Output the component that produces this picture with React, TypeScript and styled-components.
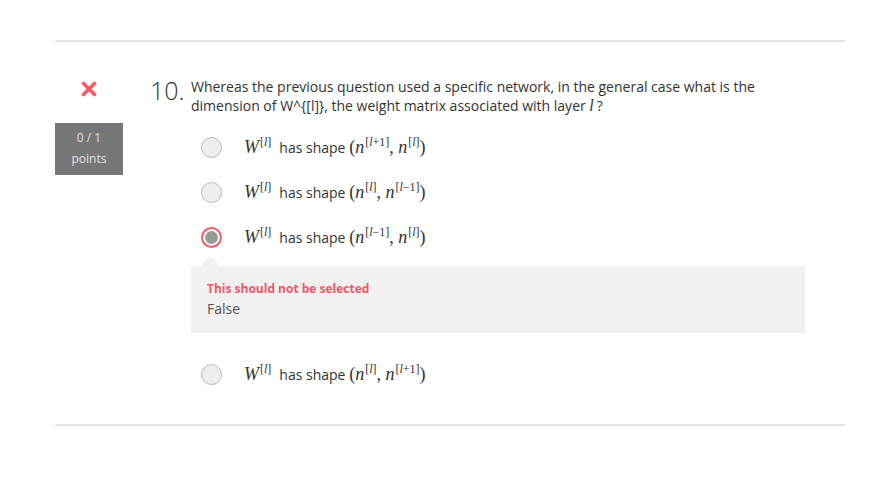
import styled, { createGlobalStyle } from 'styled-components'

const GlobalStyle = createGlobalStyle`
  body {
    margin: 0;
    background: #fff;
    font-family: 'Open Sans', 'Liberation Sans', sans-serif;
    color: #333;
  }
`

const Page = styled.div`
  width: 790px;
  padding: 40px 0 0 55px;
`

const Rule = styled.hr`
  border: none;
  border-top: 2px solid #e4e4e4;
  margin: 0;
`

const Question = styled.div`
  display: flex;
  padding: 34px 0 38px;
`

const Side = styled.div`
  width: 68px;
  display: flex;
  flex-direction: column;
  align-items: center;
`

const Cross = styled.svg`
  width: 16px;
  height: 16px;
  margin-top: 5px;
`

const Points = styled.div`
  margin-top: 26px;
  width: 68px;
  height: 52px;
  background: #767676;
  color: #e2e2e2;
  font-size: 12px;
  line-height: 21px;
  text-align: center;
  padding-top: 4px;
  box-sizing: border-box;
`

const Body = styled.div`
  flex: 1;
  padding-left: 27px;
`

const Head = styled.div`
  display: flex;
`

const Number = styled.div`
  font-size: 25px;
  font-weight: 300;
  color: #333;
  line-height: 26px;
  width: 41px;
  padding-top: 1px;
`

const Prompt = styled.div`
  font-size: 14px;
  line-height: 19px;
  color: #333;
  width: 590px;
  padding-top: 1px;
`

const MathVar = styled.i`
  font-family: 'Liberation Serif', 'DejaVu Serif', serif;
  font-size: 16px;
  padding-right: 3px;
`

const Options = styled.div<{ $top?: number }>`
  margin-top: ${(p) => p.$top ?? 20}px;
  padding-left: 41px;
`

const Option = styled.div<{ $gap?: number }>`
  display: flex;
  align-items: center;
  height: 24px;
  margin-bottom: ${(p) => p.$gap ?? 21}px;
`

const Radio = styled.span<{ $checked?: boolean }>`
  width: 21px;
  height: 21px;
  box-sizing: border-box;
  border-radius: 50%;
  margin-left: 10px;
  margin-right: 22px;
  border: ${(p) => (p.$checked ? '2px solid #f2606c' : '1px solid #b9b9b9')};
  background: ${(p) => (p.$checked ? '#999' : '#eee')};
  box-shadow: ${(p) => (p.$checked ? 'inset 0 0 0 2px #fff' : 'none')};
`

const Label = styled.span`
  font-size: 14px;
  color: #333;
  display: flex;
  align-items: baseline;
`

const M = styled.span`
  font-family: 'Liberation Serif', 'DejaVu Serif', serif;
  font-size: 18px;
  color: #333;
`

const Mi = styled.i`
  font-style: italic;
`

const Sup = styled.sup`
  font-size: 12px;
  vertical-align: 7px;
  line-height: 0;
  margin-left: 1px;
`

const Gap = styled.span`
  width: 8px;
`

const Feedback = styled.div`
  position: relative;
  background: #f1f1f1;
  margin: 17px 40px 29px 41px;
  padding: 14px 16px 13px 16px;
`

const Arrow = styled.span`
  position: absolute;
  top: -10px;
  left: 9px;
  width: 0;
  height: 0;
  border-left: 10px solid transparent;
  border-right: 10px solid transparent;
  border-bottom: 10px solid #f1f1f1;
`

const Wrong = styled.div`
  color: #f2566a;
  font-weight: 700;
  font-size: 12px;
  line-height: 18px;
`

const Explain = styled.div`
  color: #555;
  font-size: 14px;
  line-height: 22px;
`

function W() {
  return (
    <>
      <Mi>W</Mi>
      <Sup>
        [<Mi>l</Mi>]
      </Sup>
    </>
  )
}

function N({ sup }: { sup: string }) {
  return (
    <>
      <Mi>n</Mi>
      <Sup>
        [<Mi>l</Mi>
        {sup}]
      </Sup>
    </>
  )
}

function Shape({ a, b }: { a: string; b: string }) {
  return (
    <Label>
      <M>
        <W />
      </M>
      <Gap />
      has shape&nbsp;
      <M>
        (<N sup={a} />, <N sup={b} />)
      </M>
    </Label>
  )
}

export default function App() {
  return (
    <Page>
      <GlobalStyle />
      <Rule />
      <Question>
        <Side>
          <Cross viewBox="0 0 16 16">
            <path d="M2.5 2.5 L13.5 13.5 M13.5 2.5 L2.5 13.5" stroke="#fa5a64" strokeWidth="3.6" strokeLinecap="round" />
          </Cross>
          <Points>
            0 / 1
            <br />
            points
          </Points>
        </Side>
        <Body>
          <Head>
            <Number>10.</Number>
            <Prompt>
              Whereas the previous question used a specific network, in the general case what is the dimension of
              W^&#123;[l]&#125;, the weight matrix associated with layer <MathVar>l</MathVar>?
            </Prompt>
          </Head>
          <Options>
            <Option>
              <Radio />
              <Shape a="+1" b="" />
            </Option>
            <Option>
              <Radio />
              <Shape a="" b="−1" />
            </Option>
            <Option $gap={0}>
              <Radio $checked />
              <Shape a="−1" b="" />
            </Option>
          </Options>
          <Feedback>
            <Arrow />
            <Wrong>This should not be selected</Wrong>
            <Explain>False</Explain>
          </Feedback>
          <Options $top={0}>
            <Option $gap={0}>
              <Radio />
              <Shape a="" b="+1" />
            </Option>
          </Options>
        </Body>
      </Question>
      <Rule />
    </Page>
  )
}
